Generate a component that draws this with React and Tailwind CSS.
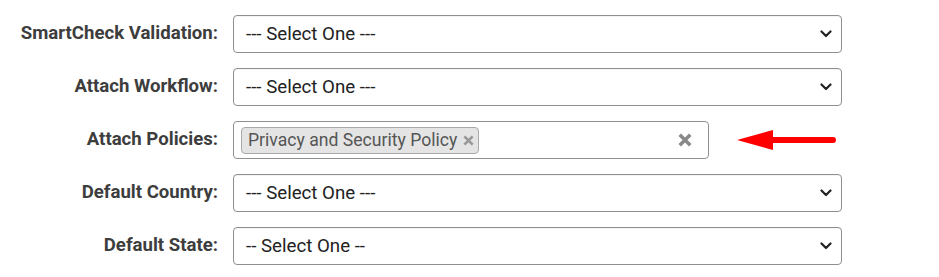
import React from 'react';

const Chevron = () => (
  <svg width="12" height="8" viewBox="0 0 12 8" className="shrink-0">
    <path d="M1.5 1.5 L6 6 L10.5 1.5" fill="none" stroke="#222" strokeWidth="2.2" strokeLinecap="round" strokeLinejoin="round" />
  </svg>
);

const Cross = ({ size, stroke, color }) => (
  <svg width={size} height={size} viewBox="0 0 12 12" className="shrink-0">
    <path d="M1.5 1.5 L10.5 10.5 M10.5 1.5 L1.5 10.5" fill="none" stroke={color} strokeWidth={stroke} />
  </svg>
);

const SelectBox = ({ value }) => (
  <div className="flex h-[38px] w-[609px] items-center justify-between rounded-[4px] border border-[#8f8f8f] bg-white pl-[12px] pr-[9px] shadow-[inset_0_1px_1px_rgba(0,0,0,0.05)]">
    <span className="text-[18.7px] text-[#222]">{value}</span>
    <Chevron />
  </div>
);

const PolicyBox = () => (
  <div className="flex items-center gap-[28px]">
    <div className="flex h-[38px] w-[476px] items-center justify-between rounded-[4px] border border-[#8f8f8f] bg-white pl-[7px] pr-[16px]">
      <div className="flex h-[27px] items-center rounded-[4px] border border-[#aaa] bg-[#e4e4e4] pl-[6px] pr-[4px]">
        <span className="text-[17.6px] text-[#555]">Privacy and Security Policy</span>
        <span className="ml-[6px]">
          <Cross size={11} stroke={3} color="#999" />
        </span>
      </div>
      <Cross size={14} stroke={3} color="#888" />
    </div>
    <svg width="100" height="22" viewBox="0 0 100 22">
      <path d="M0 11 L36 1 L36 21 Z" fill="#ff0000" />
      <line x1="34" y1="11" x2="96" y2="11" stroke="#ff0000" strokeWidth="6" strokeLinecap="round" />
    </svg>
  </div>
);

const Row = ({ label, children }) => (
  <div className="flex items-center">
    <label className="w-[218px] text-right text-[18.6px] font-bold whitespace-nowrap text-[#3d3d3d]">{label}</label>
    <div className="ml-[15px]">{children}</div>
  </div>
);

export default function App() {
  return (
    <div className="h-[277px] w-[939px] bg-white pt-[15px]" style={{ fontFamily: 'Roboto, "Liberation Sans", sans-serif' }}>
      <div className="flex flex-col gap-[15px]">
        <Row label="SmartCheck Validation:">
          <SelectBox value="--- Select One ---" />
        </Row>
        <Row label="Attach Workflow:">
          <SelectBox value="--- Select One ---" />
        </Row>
        <Row label="Attach Policies:">
          <PolicyBox />
        </Row>
        <Row label="Default Country:">
          <SelectBox value="--- Select One ---" />
        </Row>
        <Row label="Default State:">
          <SelectBox value="-- Select One --" />
        </Row>
      </div>
    </div>
  );
}
